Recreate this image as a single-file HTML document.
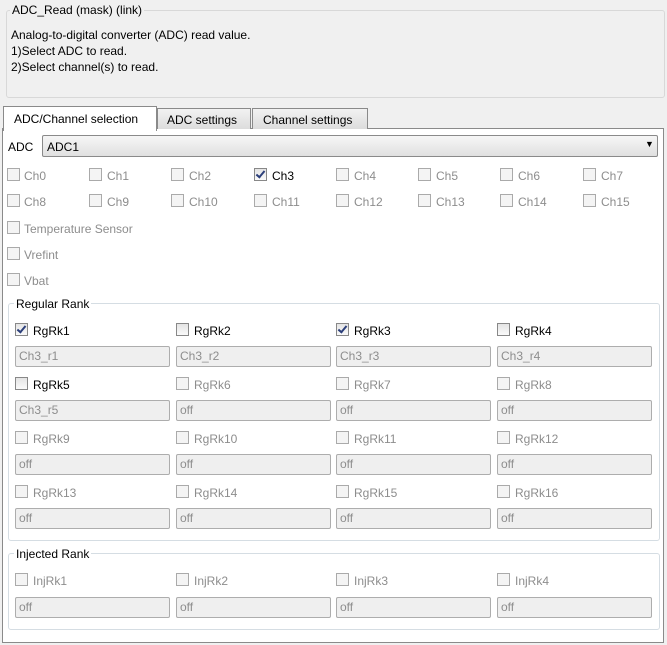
<!DOCTYPE html><html><head><meta charset="utf-8"><style>
body{margin:0;width:667px;height:645px;background:#f0f0f0;font:12px "Liberation Sans",sans-serif;color:#000;position:relative;overflow:hidden}
.a{position:absolute;white-space:nowrap}
.cb{position:absolute;width:11px;height:11px;border:1px solid #aaa;background:#f4f4f4}
.cb.e{border-color:#888;background:linear-gradient(#e4e4e4,#fafafa)}
.ck::after{content:"";position:absolute;left:3px;top:0px;width:3px;height:7px;border:solid #2c3f7a;border-width:0 2px 2px 0;transform:rotate(40deg)}
.g{color:#8d8d8d}
.tb{position:absolute;width:150px;height:19px;border:1px solid #adadad;border-radius:2px;background:#efefef;color:#8d8d8d;line-height:19px;padding-left:3px;box-sizing:content-box}
.gb{position:absolute;border:1px solid #d5dde3;border-radius:3px}
.lg{position:absolute;background:#fff;padding:0 2px}
</style></head><body>
<div class="gb" style="left:6px;top:10px;width:657px;height:86px;border-color:#d8d8d8;"></div>
<div class="a" style="left:10px;top:3px;background:#f0f0f0;padding:0 2px">ADC_Read (mask) (link)</div>
<div class="a" style="left:11px;top:28px">Analog-to-digital converter (ADC) read value.</div>
<div class="a" style="left:11px;top:44px">1)Select ADC to read.</div>
<div class="a" style="left:11px;top:60px">2)Select channel(s) to read.</div>

<div class="a" style="left:2px;top:128px;width:660px;height:513px;background:#fff;border:1px solid #8a8a8a"></div>
<div class="a" style="left:3px;top:106px;width:152px;height:24px;background:#fff;border:1px solid #8a8a8a;border-bottom:none"></div>
<div class="a" style="left:14px;top:112px">ADC/Channel selection</div>
<div class="a" style="left:157px;top:108px;width:92px;height:20px;background:linear-gradient(#f2f2f2,#dcdcdc);border:1px solid #8a8a8a;border-bottom:none"></div>
<div class="a" style="left:167px;top:113px">ADC settings</div>
<div class="a" style="left:252px;top:108px;width:114px;height:20px;background:linear-gradient(#f2f2f2,#dcdcdc);border:1px solid #8a8a8a;border-bottom:none"></div>
<div class="a" style="left:263px;top:113px">Channel settings</div>

<div class="a" style="left:8px;top:140px">ADC</div>
<div class="a" style="left:42px;top:135px;width:614px;height:20px;border:1px solid #8a8a8a;border-radius:2px;background:linear-gradient(#f6f6f6,#e0e0e0)"></div>
<div class="a" style="left:47px;top:140px">ADC1</div>
<div class="a" style="left:645px;top:139px;font-size:9px">▼</div>

<div class="cb" style="left:7px;top:168px"></div><div class="a g" style="left:24px;top:169px">Ch0</div>
<div class="cb" style="left:89px;top:168px"></div><div class="a g" style="left:107px;top:169px">Ch1</div>
<div class="cb" style="left:171px;top:168px"></div><div class="a g" style="left:189px;top:169px">Ch2</div>
<div class="cb e ck" style="left:254px;top:168px"></div><div class="a" style="left:272px;top:169px">Ch3</div>
<div class="cb" style="left:336px;top:168px"></div><div class="a g" style="left:354px;top:169px">Ch4</div>
<div class="cb" style="left:418px;top:168px"></div><div class="a g" style="left:436px;top:169px">Ch5</div>
<div class="cb" style="left:500px;top:168px"></div><div class="a g" style="left:518px;top:169px">Ch6</div>
<div class="cb" style="left:583px;top:168px"></div><div class="a g" style="left:601px;top:169px">Ch7</div>
<div class="cb" style="left:7px;top:194px"></div><div class="a g" style="left:24px;top:195px">Ch8</div>
<div class="cb" style="left:89px;top:194px"></div><div class="a g" style="left:107px;top:195px">Ch9</div>
<div class="cb" style="left:171px;top:194px"></div><div class="a g" style="left:189px;top:195px">Ch10</div>
<div class="cb" style="left:254px;top:194px"></div><div class="a g" style="left:272px;top:195px">Ch11</div>
<div class="cb" style="left:336px;top:194px"></div><div class="a g" style="left:354px;top:195px">Ch12</div>
<div class="cb" style="left:418px;top:194px"></div><div class="a g" style="left:436px;top:195px">Ch13</div>
<div class="cb" style="left:500px;top:194px"></div><div class="a g" style="left:518px;top:195px">Ch14</div>
<div class="cb" style="left:583px;top:194px"></div><div class="a g" style="left:601px;top:195px">Ch15</div>
<div class="cb" style="left:7px;top:221px"></div><div class="a g" style="left:24px;top:222px">Temperature Sensor</div>
<div class="cb" style="left:7px;top:247px"></div><div class="a g" style="left:24px;top:248px">Vrefint</div>
<div class="cb" style="left:7px;top:273px"></div><div class="a g" style="left:24px;top:274px">Vbat</div>

<div class="gb" style="left:8px;top:303px;width:650px;height:236px"></div>
<div class="lg" style="left:14px;top:297px">Regular Rank</div>

<div class="cb e ck" style="left:15px;top:323px"></div><div class="a" style="left:33px;top:324px">RgRk1</div>
<div class="cb e" style="left:176px;top:323px"></div><div class="a" style="left:194px;top:324px">RgRk2</div>
<div class="cb e ck" style="left:336px;top:323px"></div><div class="a" style="left:354px;top:324px">RgRk3</div>
<div class="cb e" style="left:497px;top:323px"></div><div class="a" style="left:515px;top:324px">RgRk4</div>
<div class="tb" style="left:15px;top:346px">Ch3_r1</div>
<div class="tb" style="left:176px;top:346px">Ch3_r2</div>
<div class="tb" style="left:336px;top:346px">Ch3_r3</div>
<div class="tb" style="left:497px;top:346px">Ch3_r4</div>

<div class="cb e" style="left:15px;top:377px"></div><div class="a" style="left:33px;top:378px">RgRk5</div>
<div class="cb" style="left:176px;top:377px"></div><div class="a g" style="left:194px;top:378px">RgRk6</div>
<div class="cb" style="left:336px;top:377px"></div><div class="a g" style="left:354px;top:378px">RgRk7</div>
<div class="cb" style="left:497px;top:377px"></div><div class="a g" style="left:515px;top:378px">RgRk8</div>
<div class="tb" style="left:15px;top:400px">Ch3_r5</div>
<div class="tb" style="left:176px;top:400px">off</div>
<div class="tb" style="left:336px;top:400px">off</div>
<div class="tb" style="left:497px;top:400px">off</div>

<div class="cb" style="left:15px;top:431px"></div><div class="a g" style="left:33px;top:432px">RgRk9</div>
<div class="cb" style="left:176px;top:431px"></div><div class="a g" style="left:194px;top:432px">RgRk10</div>
<div class="cb" style="left:336px;top:431px"></div><div class="a g" style="left:354px;top:432px">RgRk11</div>
<div class="cb" style="left:497px;top:431px"></div><div class="a g" style="left:515px;top:432px">RgRk12</div>
<div class="tb" style="left:15px;top:454px">off</div>
<div class="tb" style="left:176px;top:454px">off</div>
<div class="tb" style="left:336px;top:454px">off</div>
<div class="tb" style="left:497px;top:454px">off</div>

<div class="cb" style="left:15px;top:485px"></div><div class="a g" style="left:33px;top:486px">RgRk13</div>
<div class="cb" style="left:176px;top:485px"></div><div class="a g" style="left:194px;top:486px">RgRk14</div>
<div class="cb" style="left:336px;top:485px"></div><div class="a g" style="left:354px;top:486px">RgRk15</div>
<div class="cb" style="left:497px;top:485px"></div><div class="a g" style="left:515px;top:486px">RgRk16</div>
<div class="tb" style="left:15px;top:508px">off</div>
<div class="tb" style="left:176px;top:508px">off</div>
<div class="tb" style="left:336px;top:508px">off</div>
<div class="tb" style="left:497px;top:508px">off</div>

<div class="gb" style="left:8px;top:553px;width:650px;height:75px"></div>
<div class="lg" style="left:14px;top:547px">Injected Rank</div>
<div class="cb" style="left:15px;top:573px"></div><div class="a g" style="left:33px;top:574px">InjRk1</div>
<div class="cb" style="left:176px;top:573px"></div><div class="a g" style="left:194px;top:574px">InjRk2</div>
<div class="cb" style="left:336px;top:573px"></div><div class="a g" style="left:354px;top:574px">InjRk3</div>
<div class="cb" style="left:497px;top:573px"></div><div class="a g" style="left:515px;top:574px">InjRk4</div>
<div class="tb" style="left:15px;top:597px">off</div>
<div class="tb" style="left:176px;top:597px">off</div>
<div class="tb" style="left:336px;top:597px">off</div>
<div class="tb" style="left:497px;top:597px">off</div>
</body></html>
